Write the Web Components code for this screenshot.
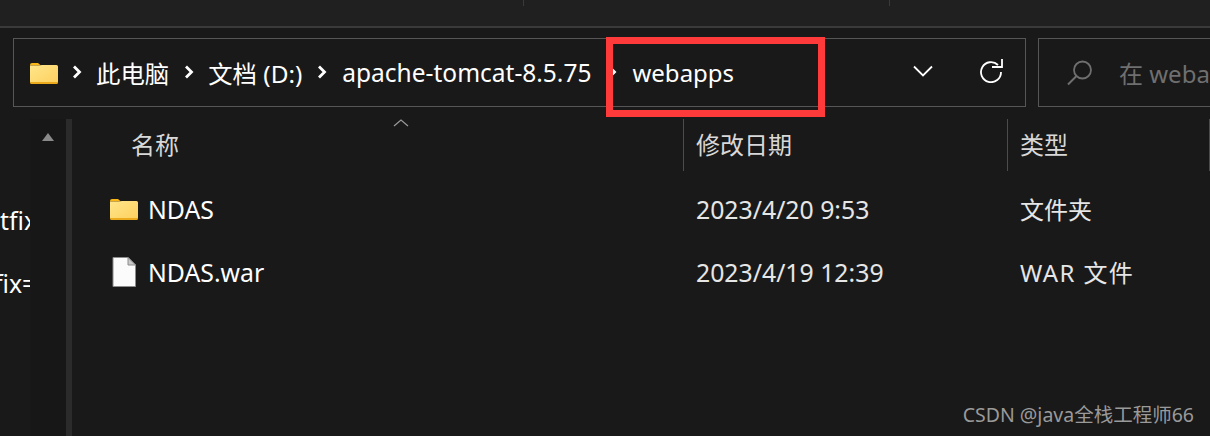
<!DOCTYPE html>
<html lang="zh">
<head>
<meta charset="utf-8">
<style>
  html, body { margin: 0; height: 100%; background: #191919; overflow: hidden; }
  body {
    width: 1210px;
    height: 436px;
    position: relative;
    font-family: "Noto Sans", "Noto Sans CJK SC", sans-serif;
    color: #fff;
  }
</style>
</head>
<body>
<top-strip></top-strip>
<address-row>
  <crumb-item>此电脑</crumb-item>
  <crumb-item>文档 (D:)</crumb-item>
  <crumb-item long>apache-tomcat-8.5.75</crumb-item>
  <crumb-item last>webapps</crumb-item>
</address-row>
<file-pane>
  <file-row name="NDAS" date="2023/4/20 9:53" type="文件夹" icon="folder"></file-row>
  <file-row name="NDAS.war" date="2023/4/19 12:39" type="WAR 文件" icon="file" wide></file-row>
</file-pane>
<red-mark></red-mark>
<water-mark>CSDN @java全栈工程师66</water-mark>

<script>
const FOLDER = `<svg width="28" height="22" viewBox="0 0 28 22">
  <path d="M0 3a2 2 0 0 1 2-2h6l3 2.500h-11z" fill="#fbb514"/>
  <path d="M0 3.500h9l3-0.500h14.500a1.500 1.500 0 0 1 1.500 1.500v15a1.500 1.500 0 0 1-1.500 1.500h-25a1.500 1.500 0 0 1-1.500-1.500z" fill="url(#fg)"/>
  <path d="M0 20h28v0.500a1.500 1.500 0 0 1-1.500 1.500h-25a1.500 1.500 0 0 1-1.500-1.500z" fill="#eba91c"/>
  <defs><linearGradient id="fg" x1="0" y1="0" x2="1" y2="1"><stop offset="0" stop-color="#ffe68a"/><stop offset="1" stop-color="#fdd05f"/></linearGradient></defs>
</svg>`;

const FILE = `<svg width="24" height="30" viewBox="0 0 24 30">
  <path d="M1 .5h15l7.500 7.500v21.500h-22.500z" fill="#fbfbfb" stroke="#8c8c8c"/>
  <path d="M16 .5v7.500h7.500z" fill="#c9c9c9" stroke="#8c8c8c"/>
</svg>`;

class TopStrip extends HTMLElement {
  constructor() {
    super();
    this.attachShadow({ mode: "open" }).innerHTML = `
      <style>
        :host { display: block; height: 26px; background: #202020; border-bottom: 2px solid #3a3a3a; position: relative; }
        i { position: absolute; top: 0; width: 1px; height: 6px; background: #3a3a3a; }
      </style>
      <i style="left:523px"></i><i style="left:889px"></i>`;
  }
}

class CrumbItem extends HTMLElement {
  constructor() {
    super();
    this.attachShadow({ mode: "open" }).innerHTML = `
      <style>
        :host { display: flex; align-items: center; font-size: 24.4px; color: #fff; white-space: nowrap; }
        svg { display: block; margin: -1px 14px 0 0; flex: none; }
        :host([long]) { font-size: 24.500px; }
        :host([long]) svg { margin-right: 15px; }
        :host([last]) { font-size: 24px; margin-left: 1px; }
        :host([last]) svg { margin-right: 15px; }
      </style>
      <svg width="10" height="14" viewBox="0 0 10 14"><path d="M2 1.500l5.500 5.500-5.500 5.500" fill="none" stroke="#fff" stroke-width="2.800"/></svg>
      <slot></slot>`;
  }
}

class AddressRow extends HTMLElement {
  constructor() {
    super();
    this.attachShadow({ mode: "open" }).innerHTML = `
      <style>
        :host { display: flex; gap: 12px; margin: 10px 0 0 13px; height: 69px; }
        .bar {
          box-sizing: border-box; width: 1013px; border: 1px solid #565656;
          display: flex; align-items: center; padding-left: 16px;
        }
        .crumbs { display: flex; align-items: center; gap: 15px; margin-left: 14px; flex: 1; }
        .chev { display: flex; margin: 0 47px 3px 0; }
        .reload { display: flex; margin: 0 21px 3px 0; }
        .search {
          box-sizing: border-box; flex: 1; min-width: 0; border: 1px solid #565656; border-right: 0;
          display: flex; align-items: center; padding-left: 28px; gap: 26px;
          color: #6f6f6f; font-size: 24px; white-space: nowrap; overflow: hidden;
        }
        .search svg { flex: none; }
      </style>
      <div class="bar">
        ${FOLDER}
        <div class="crumbs"><slot></slot></div>
        <div class="chev"><svg width="20" height="12" viewBox="0 0 20 12"><path d="M1 1.500l9 9 9-9" fill="none" stroke="#fff" stroke-width="1.800"/></svg></div>
        <div class="reload"><svg width="24" height="24" viewBox="0 0 24 24"><path d="M18 6a10 10 0 1 0 3 7" fill="none" stroke="#fff" stroke-width="1.800"/><path d="M22 0v8h-10" fill="none" stroke="#fff" stroke-width="1.800"/></svg></div>
      </div>
      <div class="search">
        <svg width="26" height="26" viewBox="0 0 26 26"><circle cx="15.500" cy="10" r="8.500" fill="none" stroke="#6f6f6f" stroke-width="1.800"/><path d="M9.500 16l-8.500 8.500" stroke="#6f6f6f" stroke-width="2"/></svg>
        <span>在 webapps</span>
      </div>`;
  }
}

class FilePane extends HTMLElement {
  constructor() {
    super();
    this.attachShadow({ mode: "open" }).innerHTML = `
      <style>
        :host { display: flex; margin-top: 12px; height: 317px; }
        .nav { width: 30px; overflow: hidden; font-size: 24.8px; color: #fff; padding-top: 84px; box-sizing: border-box; white-space: nowrap; }
        .nav div { height: 63px; line-height: 34px; }
        .nav div + div { margin-left: -6px; }
        .track { width: 36px; background: #171717; display: flex; justify-content: center; padding-top: 14px; box-sizing: border-box; }
        .thumb { width: 6px; background: #2b2b2b; }
        .main { flex: 1; display: flex; flex-direction: column; }
        .head { display: grid; grid-template-columns: 612px 324px 1fr; height: 52px; margin-bottom: 6px; position: relative; font-size: 24px; color: #d8d8d8; }
        .head span { display: flex; align-items: center; border-right: 1px solid #4c4c4c; padding: 0 0 4px 12px; }
        .head span:first-child { padding-left: 59px; }
        .head span:last-child { border: 0; }
        .sort { position: absolute; left: 321px; top: 0; }
      </style>
      <div class="nav"><div>tfix</div><div>fix=</div></div>
      <div class="track">
        <svg width="12" height="8" viewBox="0 0 12 8"><path d="M6 0l6 8h-12z" fill="#8a8a8a"/></svg>
      </div>
      <div class="thumb"></div>
      <div class="main">
        <div class="head">
          <span>名称</span><span>修改日期</span><span>类型</span>
          <svg class="sort" width="16" height="8" viewBox="0 0 16 8"><path d="M1 7l7-6 7 6" fill="none" stroke="#9a9a9a" stroke-width="1.200"/></svg>
        </div>
        <slot></slot>
      </div>`;
  }
}

class FileRow extends HTMLElement {
  constructor() {
    super();
    this.attachShadow({ mode: "open" }).innerHTML = `
      <style>
        :host { display: grid; grid-template-columns: 624px 324px 1fr; height: 63px; align-items: center; font-size: 24.8px; color: #e6e6e6; white-space: nowrap; }
        .name { display: flex; align-items: center; color: #fff; }
        .ico { width: 28px; margin-left: 38px; margin-right: 10px; display: flex; justify-content: center; }
        .y { font-size: 24px; }
        :host([wide]) .y { letter-spacing: 1.400px; }
      </style>
      <div class="name"><span class="ico"></span><span class="n"></span></div>
      <div class="d"></div>
      <div class="y"></div>`;
  }

  connectedCallback() {
    const root = this.shadowRoot;
    root.querySelector(".ico").innerHTML = this.getAttribute("icon") === "folder" ? FOLDER : FILE;
    root.querySelector(".n").textContent = this.getAttribute("name");
    root.querySelector(".d").textContent = this.getAttribute("date");
    root.querySelector(".y").textContent = this.getAttribute("type");
  }
}

class RedMark extends HTMLElement {
  constructor() {
    super();
    this.attachShadow({ mode: "open" }).innerHTML = `
      <style>
        :host { position: absolute; left: 606px; top: 37px; width: 219px; height: 80px; box-sizing: border-box; border: 7px solid #ff3a3a; }
      </style>`;
  }
}

class WaterMark extends HTMLElement {
  constructor() {
    super();
    this.attachShadow({ mode: "open" }).innerHTML = `
      <style>
        :host { position: absolute; right: 16px; top: 403px; font-size: 19.500px; line-height: 24px; color: #9a9a9a; white-space: nowrap; }
      </style>
      <slot></slot>`;
  }
}

customElements.define("top-strip", TopStrip);
customElements.define("crumb-item", CrumbItem);
customElements.define("address-row", AddressRow);
customElements.define("file-pane", FilePane);
customElements.define("file-row", FileRow);
customElements.define("red-mark", RedMark);
customElements.define("water-mark", WaterMark);
</script>
</body>
</html>
